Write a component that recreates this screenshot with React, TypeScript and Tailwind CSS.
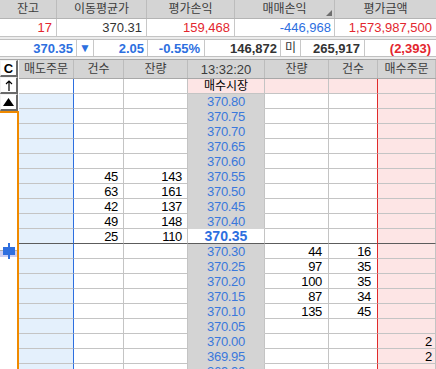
import React from "react";

type Row = {
  price?: string;
  sCnt?: string;
  sQty?: string;
  bQty?: string;
  bCnt?: string;
  bOrd?: string;
  market?: boolean;
  current?: boolean;
};

const rows: Row[] = [
  { market: true },
  { price: "370.80" },
  { price: "370.75" },
  { price: "370.70" },
  { price: "370.65" },
  { price: "370.60" },
  { price: "370.55", sCnt: "45", sQty: "143" },
  { price: "370.50", sCnt: "63", sQty: "161" },
  { price: "370.45", sCnt: "42", sQty: "137" },
  { price: "370.40", sCnt: "49", sQty: "148" },
  { price: "370.35", sCnt: "25", sQty: "110", current: true },
  { price: "370.30", bQty: "44", bCnt: "16" },
  { price: "370.25", bQty: "97", bCnt: "35" },
  { price: "370.20", bQty: "100", bCnt: "35" },
  { price: "370.15", bQty: "87", bCnt: "34" },
  { price: "370.10", bQty: "135", bCnt: "45" },
  { price: "370.05" },
  { price: "370.00", bOrd: "2" },
  { price: "369.95", bOrd: "2" },
  { price: "369.90" },
];

function Btn({ children, bold }: { children: React.ReactNode; bold?: boolean }) {
  return (
    <div
      className={
        "h-[17px] w-[18px] flex items-center justify-center bg-white border-t border-l border-t-[#f4f4f4] border-l-[#f4f4f4] border-b-2 border-r-2 border-b-[#6a6a6a] border-r-[#6a6a6a] text-[13px] leading-none text-black " +
        (bold ? "font-bold" : "")
      }
    >
      {children}
    </div>
  );
}

export default function App() {
  return (
    <div className="relative w-[436px] h-[369px] overflow-hidden bg-[#ececec] font-['Liberation_Sans','Noto_Sans_CJK_KR',sans-serif] text-[12px] leading-none">
      {/* Summary header */}
      <div className="flex h-[19px] bg-[#d4d4d4] border-b border-[#b4b4b4] text-[#3c3c3c]">
        <div className="w-[57px] border-r border-[#bcbcbc] flex items-center justify-center">잔고</div>
        <div className="w-[90px] border-r border-[#bcbcbc] flex items-center justify-center">이동평균가</div>
        <div className="w-[88px] border-r border-[#bcbcbc] flex items-center justify-center">평가손익</div>
        <div className="relative w-[100px] border-r border-[#bcbcbc] flex items-center justify-center">
          매매손익
          <svg className="absolute right-[2px] bottom-[2px]" width="6" height="6" viewBox="0 0 6 6">
            <polygon points="6,0 6,6 0,6" fill="#6e6e6e" />
          </svg>
        </div>
        <div className="w-[101px] flex items-center justify-center">평가금액</div>
      </div>
      {/* Summary values */}
      <div className="flex h-[18px] bg-white border-b border-[#c4c4c4] text-[13px]">
        <div className="w-[57px] border-r border-[#c8c8c8] flex items-center justify-end pr-[4px] text-[#e3262e]">17</div>
        <div className="w-[90px] border-r border-[#c8c8c8] flex items-center justify-end pr-[4px] text-[#333]">370.31</div>
        <div className="w-[88px] border-r border-[#c8c8c8] flex items-center justify-end pr-[4px] text-[#e3262e]">159,468</div>
        <div className="w-[100px] border-r border-[#c8c8c8] flex items-center justify-end pr-[3px] text-[#2d6fdf]">-446,968</div>
        <div className="w-[101px] flex items-center justify-end pr-[4px] text-[#e3262e]">1,573,987,500</div>
      </div>
      <div className="h-[2px]" />
      {/* Price row */}
      <div className="flex h-[18px] bg-white border-y border-[#c0c0c0] font-bold text-[13px]">
        <div className="w-[77px] border-r border-[#c8c8c8] flex items-center justify-end pr-[3px] text-[#2d6fdf]">370.35</div>
        <div className="w-[17px] border-r border-[#c8c8c8] flex items-center justify-center text-[#2d6fdf] text-[12px]">▼</div>
        <div className="w-[54px] border-r border-[#c8c8c8] flex items-center justify-end pr-[3px] text-[#2d6fdf]">2.05</div>
        <div className="w-[57px] border-r border-[#c8c8c8] flex items-center justify-end pr-[4px] text-[#2d6fdf]">-0.55%</div>
        <div className="w-[76px] border-r border-[#c8c8c8] flex items-center justify-end pr-[3px] text-[#333]">146,872</div>
        <div className="w-[20px] border-r border-[#c8c8c8] flex items-center justify-center text-[#333] font-normal text-[12px]">미</div>
        <div className="w-[64px] border-r border-[#c8c8c8] flex items-center justify-end pr-[4px] text-[#333]">265,917</div>
        <div className="w-[71px] flex items-center justify-end pr-[5px] text-[#e3262e]">(2,393)</div>
      </div>
      <div className="h-[3px] border-b border-[#a8a8a8]" />
      {/* Order book */}
      <div className="flex">
        <div className="w-[19px] flex flex-col bg-white">
          <Btn bold>C</Btn>
          <Btn>
            <svg width="8" height="11" viewBox="0 0 8 11">
              <path d="M4 1 L4 11 M1 4 L4 1 L7 4" stroke="#000" strokeWidth="1.2" fill="none" />
            </svg>
          </Btn>
          <Btn>
            <svg width="11" height="8" viewBox="0 0 11 8">
              <polygon points="5.5,0 11,8 0,8" fill="#000" />
            </svg>
          </Btn>
          <div className="flex-1 h-[260px] border-t-2 border-r-2 border-[#f08a00]" />
        </div>
        <div className="w-[417px] flex flex-col">
          <div className="flex h-[19px] bg-[#d4d4d4] border-b border-[#a8a8a8] text-[#3c3c3c]">
            <div className="w-[55px] border-r border-[#bcbcbc] flex items-center justify-center">매도주문</div>
            <div className="w-[50px] border-r border-[#bcbcbc] flex items-center justify-center">건수</div>
            <div className="w-[64px] border-r border-[#bcbcbc] flex items-center justify-center">잔량</div>
            <div className="w-[77px] border-r border-[#bcbcbc] flex items-center justify-center text-[13px]">13:32:20</div>
            <div className="w-[64px] border-r border-[#bcbcbc] flex items-center justify-center">잔량</div>
            <div className="w-[49px] border-r border-[#bcbcbc] flex items-center justify-center">건수</div>
            <div className="w-[58px] border-r border-[#bcbcbc] flex items-center justify-center">매수주문</div>
          </div>
          {rows.map((r, i) => {
            const b = r.current ? "border-b-[#5c5c5c]" : "border-b-[#c4c4c4]";
            return (
              <div key={i} className="flex h-[15px] text-black text-[13px] tracking-[-0.3px]">
                <div
                  className={
                    "w-[55px] border-b border-r border-r-[#2d6fdf] " +
                    b +
                    " " +
                    (r.market ? "bg-white" : "bg-[#e4f0fc]")
                  }
                />
                <div className={"w-[50px] border-b border-r border-r-[#c4c4c4] bg-white flex items-center justify-end pr-[5px] " + b}>
                  {r.sCnt}
                </div>
                <div className={"w-[64px] border-b border-r border-r-[#c4c4c4] bg-white flex items-center justify-end pr-[5px] " + b}>
                  {r.sQty}
                </div>
                {r.market ? (
                  <div className="w-[77px] border-b border-r border-r-[#c4c4c4] border-b-[#c4c4c4] bg-[#fde5e5] flex items-center justify-center text-black text-[12px] tracking-normal">
                    매수시장
                  </div>
                ) : r.current ? (
                  <div className={"w-[77px] border-b border-r border-r-[#c4c4c4] bg-white flex items-center justify-center text-[#2d6fdf] font-bold text-[14px] tracking-normal " + b}>
                    {r.price}
                  </div>
                ) : (
                  <div className="w-[77px] border-b border-r border-r-[#c4c4c4] border-b-[#d4d4d4] bg-[#d4d4d4] flex items-center justify-center text-[#3a78dc]">
                    {r.price}
                  </div>
                )}
                <div
                  className={
                    "w-[64px] border-b border-r border-r-[#c4c4c4] flex items-center justify-end pr-[6px] " +
                    b +
                    " " +
                    (r.market ? "bg-[#fde5e5]" : "bg-white")
                  }
                >
                  {r.bQty}
                </div>
                <div
                  className={
                    "w-[49px] border-b border-r border-r-[#e02a2a] flex items-center justify-end pr-[6px] " +
                    b +
                    " " +
                    (r.market ? "bg-[#fde5e5]" : "bg-white")
                  }
                >
                  {r.bCnt}
                </div>
                <div className={"w-[58px] border-b border-r border-r-[#c4c4c4] bg-[#fde5e5] flex items-center justify-end pr-[3px] " + b}>
                  {r.bOrd}
                </div>
              </div>
            );
          })}
        </div>
      </div>
      {/* Current-price marker */}
      <div className="absolute left-0 top-[250px] w-[17px] h-[7px] bg-[#cfcff2] border-t border-[#b0b0b0]" />
      <div className="absolute left-[8px] top-[243px] w-[2px] h-[16px] bg-[#2f6fdf]" />
      <div className="absolute left-[3px] top-[247px] w-[12px] h-[8px] bg-[#2f6fdf]" />
    </div>
  );
}
